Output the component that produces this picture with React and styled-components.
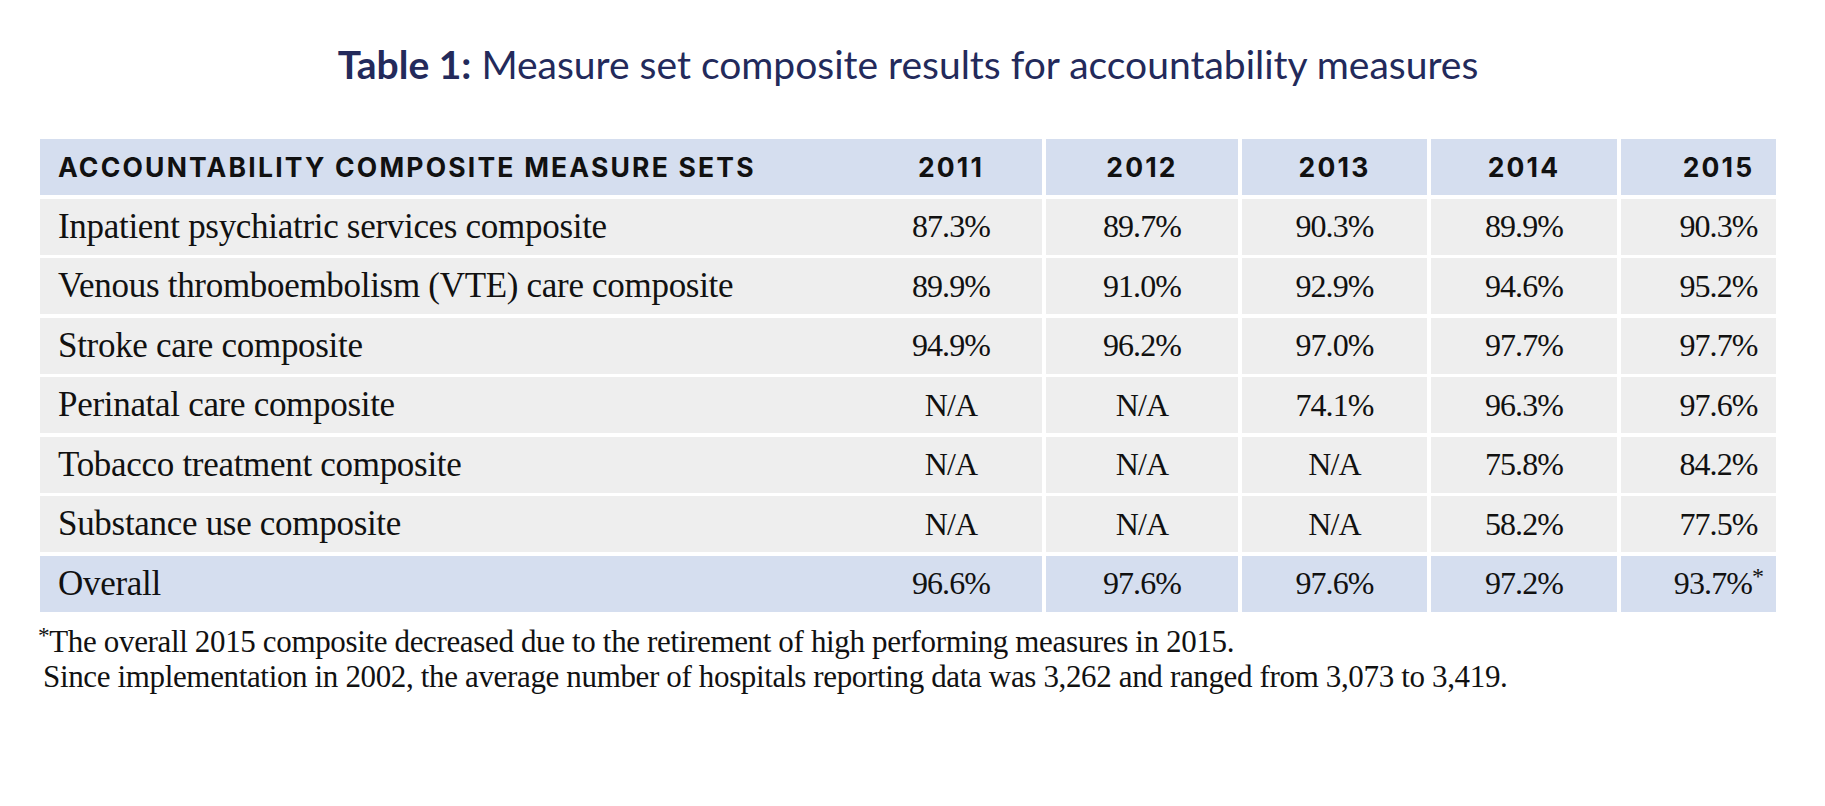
import styled, { createGlobalStyle } from 'styled-components';

const GlobalStyle = createGlobalStyle`
    html, body {
        margin: 0;
        padding: 0;
        background: #ffffff;
    }
`;

const columns = [
    { key: 'y2011', label: '2011', width: 182, divider: false, pad: 0 },
    { key: 'y2012', label: '2012', width: 196, divider: true, pad: 0 },
    { key: 'y2013', label: '2013', width: 189, divider: true, pad: 0 },
    { key: 'y2014', label: '2014', width: 190, divider: true, pad: 0 },
    { key: 'y2015', label: '2015', width: 159, divider: true, pad: 40 },
];

const rows = [
    { name: 'Inpatient psychiatric services composite', values: ['87.3%', '89.7%', '90.3%', '89.9%', '90.3%'] },
    { name: 'Venous thromboembolism (VTE) care composite', values: ['89.9%', '91.0%', '92.9%', '94.6%', '95.2%'] },
    { name: 'Stroke care composite', values: ['94.9%', '96.2%', '97.0%', '97.7%', '97.7%'] },
    { name: 'Perinatal care composite', values: ['N/A', 'N/A', '74.1%', '96.3%', '97.6%'] },
    { name: 'Tobacco treatment composite', values: ['N/A', 'N/A', 'N/A', '75.8%', '84.2%'] },
    { name: 'Substance use composite', values: ['N/A', 'N/A', 'N/A', '58.2%', '77.5%'] },
];

const overall = ['96.6%', '97.6%', '97.6%', '97.2%', '93.7%'];

const App = () => {
    return (
        <Page>
            <GlobalStyle />
            <Title>
                <strong>Table 1:</strong> Measure set composite results for accountability measures
            </Title>

            <Table>
                <Row $tone="blue">
                    <HeadCell $width={820} $align="left">ACCOUNTABILITY COMPOSITE MEASURE SETS</HeadCell>
                    {columns.map((c) => (
                        <HeadCell key={c.key} $width={c.width} $divider={c.divider} $pad={c.pad}>
                            {c.label}
                        </HeadCell>
                    ))}
                </Row>

                {rows.map((r) => (
                    <Row key={r.name} $tone="gray">
                        <LabelCell $width={820} $align="left">{r.name}</LabelCell>
                        {r.values.map((v, i) => (
                            <ValueCell
                                key={columns[i].key}
                                $width={columns[i].width}
                                $divider={columns[i].divider}
                                $pad={columns[i].pad}
                            >
                                {v}
                            </ValueCell>
                        ))}
                    </Row>
                ))}

                <Row $tone="blue">
                    <LabelCell $width={820} $align="left">Overall</LabelCell>
                    {overall.map((v, i) => (
                        <ValueCell
                            key={columns[i].key}
                            $width={columns[i].width}
                            $divider={columns[i].divider}
                            $pad={columns[i].pad}
                        >
                            <span>
                                {v}
                                {i === overall.length - 1 && <Mark>*</Mark>}
                            </span>
                        </ValueCell>
                    ))}
                </Row>
            </Table>

            <Notes>
                <NoteLine><Mark>*</Mark>The overall 2015 composite decreased due to the retirement of high performing measures in 2015.</NoteLine>
                <NoteLine $indent>Since implementation in 2002, the average number of hospitals reporting data was 3,262 and ranged from 3,073 to 3,419.</NoteLine>
            </Notes>
        </Page>
    );
};

export default App;

const Page = styled.div`
    width: 1825px;
    height: 806px;
    box-sizing: border-box;
    padding: 40px 49px 0 40px;
    display: flex;
    flex-direction: column;
    background: #ffffff;
    overflow: hidden;
`;

const Title = styled.h1`
    margin: 0;
    text-align: center;
    font-family: 'Lato', 'Liberation Sans', sans-serif;
    font-size: 39px;
    font-weight: 400;
    line-height: 48px;
    color: #232a5b;

    strong {
        font-weight: 700;
    }
`;

const Table = styled.div`
    margin-top: 51px;
    display: flex;
    flex-direction: column;
    gap: 3.5px;
    width: 1736px;
`;

const Row = styled.div`
    display: flex;
    height: 56px;
    background: ${(p) => (p.$tone === 'blue' ? '#d5deef' : '#eeeeee')};
`;

const Cell = styled.div`
    box-sizing: border-box;
    width: ${(p) => p.$width}px;
    flex: none;
    display: flex;
    align-items: center;
    justify-content: ${(p) => (p.$align === 'left' ? 'flex-start' : 'center')};
    padding-left: ${(p) => (p.$align === 'left' ? 18 : p.$pad || 0)}px;
    border-left: ${(p) => (p.$divider ? '4px solid #ffffff' : 'none')};
    color: #111111;
    white-space: nowrap;
`;

const HeadCell = styled(Cell)`
    font-family: 'Inter', 'Liberation Sans', sans-serif;
    font-size: 26.5px;
    font-weight: 700;
    letter-spacing: 2.2px;
`;

const LabelCell = styled(Cell)`
    font-family: 'Liberation Serif', serif;
    font-size: 35px;
    letter-spacing: -0.3px;
`;

const ValueCell = styled(Cell)`
    font-family: 'Liberation Serif', serif;
    font-size: 32px;
    letter-spacing: -0.9px;
`;

const Mark = styled.span`
    font-size: 0.75em;
    vertical-align: 0.4em;
    line-height: 0;
`;

const Notes = styled.div`
    margin-top: 12px;
    font-family: 'Liberation Serif', serif;
    font-size: 31px;
    line-height: 35px;
    letter-spacing: -0.35px;
    color: #111111;
`;

const NoteLine = styled.div`
    padding-left: ${(p) => (p.$indent ? 5 : 0)}px;
    margin-left: -2px;
    white-space: nowrap;
`;
